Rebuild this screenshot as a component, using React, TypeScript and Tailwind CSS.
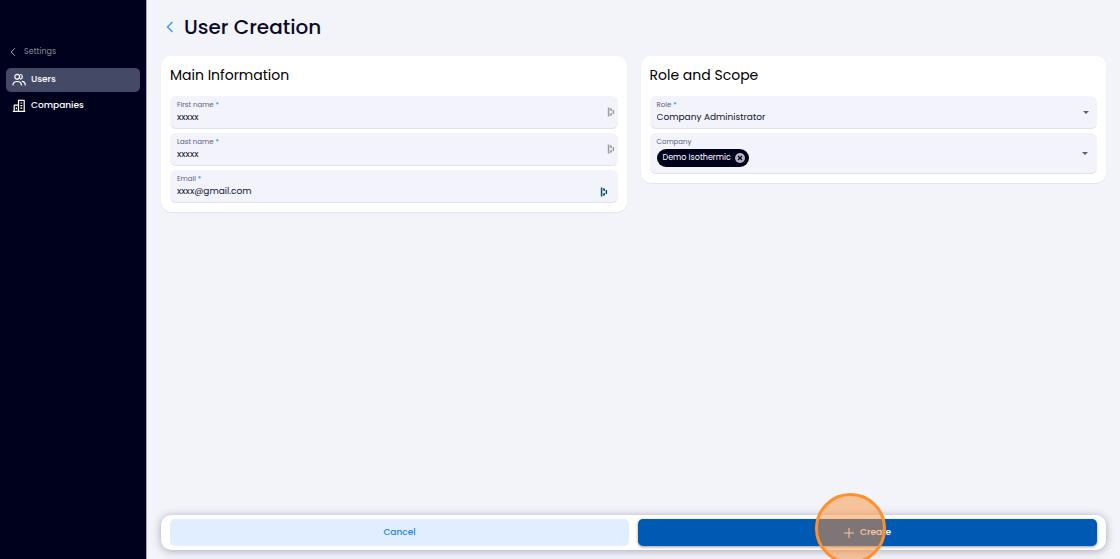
import { useState } from "react";
import type { ReactNode } from "react";

function ChevronLeft({ className }: { className: string }) {
  return (
    <svg viewBox="0 0 8 12" fill="none" stroke="currentColor" className={className} aria-hidden="true">
      <path d="M6.5 1 1.5 6l5 5" strokeWidth="1.3" />
    </svg>
  );
}

function UsersIcon() {
  return (
    <svg viewBox="0 0 14 14" fill="none" stroke="currentColor" strokeWidth="1.2" strokeLinecap="round" className="size-3.5 shrink-0" aria-hidden="true">
      <circle cx="5.2" cy="3.8" r="2.4" />
      <path d="M8.6 1.5a2.4 2.4 0 0 1 0 4.6" />
      <path d="M1 12c0-2.1 1.7-3.5 4.2-3.5S9.4 9.900 9.400 12" />
      <path d="M10.400 8.300c1.900.4 2.900 1.800 2.900 3.700" />
    </svg>
  );
}

function CompaniesIcon() {
  return (
    <svg viewBox="0 0 14 14" fill="none" stroke="currentColor" strokeWidth="1.2" className="size-3.5 shrink-0" aria-hidden="true">
      <path d="M6.500 12.400V1.400h5.700v11M6.500 6.200H2.200v6.200M.800 12.400h12.400" strokeLinejoin="round" />
      <path d="M4.400 8.500v1.800M8.400 4h1.900M8.400 6.600h1.900M8.400 9.200h1.900" />
    </svg>
  );
}

function ManagerIcon({ className }: { className: string }) {
  return (
    <svg viewBox="0 0 8 10" fill="currentColor" className={`h-2.5 w-2 ${className}`} aria-hidden="true">
      <path d="M.8.6h1.600v8.800H.8zM3.100.9l1.900.9v2.400l-1.900-.9zM3.100 6.700 5 5.800v2.400l-1.900.9zM5.600 3h1.500v4H5.600z" />
    </svg>
  );
}

function CaretDown({ className }: { className: string }) {
  return (
    <svg viewBox="0 0 6 3" fill="currentColor" className={`h-[3px] w-1.5 text-[#59607a] ${className}`} aria-hidden="true">
      <path d="M0 0h6L3 3z" />
    </svg>
  );
}

const fieldBox =
  "relative rounded-md border-b border-[#dfe1ee] bg-[#f2f3fb] px-[7px]";
const labelText = "block pt-1 text-[7px] leading-[10px] text-[#59607f]";

function Required() {
  return <span className="text-[#1486ec]"> *</span>;
}

type TextFieldProps = {
  id: string;
  label: string;
  type?: string;
  value: string;
  icon: ReactNode;
};

function TextField({ id, label, type = "text", value, icon }: TextFieldProps) {
  const [text, setText] = useState(value);
  return (
    <div className={`${fieldBox} h-[33px]`}>
      <label htmlFor={id} className={labelText}>
        {label}
        <Required />
      </label>
      <input
        id={id}
        type={type}
        value={text}
        onChange={(e) => setText(e.target.value)}
        className="block h-[14px] w-full bg-transparent text-[9px] leading-[14px] text-[#111432] outline-none"
      />
      {icon}
    </div>
  );
}

function Card({ title, children }: { title: string; children: ReactNode }) {
  return (
    <section className="min-w-0 flex-1 rounded-[10px] bg-white p-[9px] shadow-[0_1px_1px_rgba(40,45,90,0.08)]">
      <h2 className="mb-[11px] text-[14px] leading-5 text-black">{title}</h2>
      <div className="flex flex-col gap-1">{children}</div>
    </section>
  );
}

function Sidebar() {
  return (
    <aside className="w-[147px] shrink-0 border-r border-[#a5a7b3] bg-[#00021d] px-1.5 pt-11 text-white">
      <a href="#settings" className="flex h-4 items-center gap-2 px-1 text-[8px] text-[#858896]">
        <ChevronLeft className="h-2.5 w-1.5 text-[#b2b4be]" />
        <span>Settings</span>
      </a>
      <nav className="mt-2 flex flex-col gap-[2px] text-[9px] font-medium">
        <a href="#users" className="flex h-6 items-center gap-[5px] rounded-[5px] bg-[#444a66] px-1.5">
          <UsersIcon />
          Users
        </a>
        <a href="#companies" className="flex h-6 items-center gap-[5px] rounded-[5px] px-1.5">
          <CompaniesIcon />
          Companies
        </a>
      </nav>
    </aside>
  );
}

export default function App() {
  const [companies, setCompanies] = useState(["Demo Isothermic"]);

  return (
    <div className="flex min-h-screen bg-[#f3f4fa] font-['Poppins','Inter',sans-serif]">
      <Sidebar />
      <main className="flex min-w-0 flex-1 flex-col overflow-hidden px-[14px] pb-[9px]">
        <header className="flex h-14 items-center gap-2.5 pb-[2px] pl-[5px]">
          <a href="#back" aria-label="Back" className="text-[#3298ef]">
            <ChevronLeft className="h-3 w-2" />
          </a>
          <h1 className="text-[20px] leading-7 font-medium text-[#090b28]">User Creation</h1>
        </header>

        <div className="flex items-start gap-[14px]">
          <Card title="Main Information">
            <TextField
              id="first-name"
              label="First name"
              value="xxxxx"
              icon={<ManagerIcon className="absolute top-[11px] right-[3px] text-[#9c9ca2]" />}
            />
            <TextField
              id="last-name"
              label="Last name"
              value="xxxxx"
              icon={<ManagerIcon className="absolute top-[11px] right-[3px] text-[#9c9ca2]" />}
            />
            <TextField
              id="email"
              label="Email"
              type="email"
              value="xxxx@gmail.com"
              icon={<ManagerIcon className="absolute right-2.5 bottom-[5px] text-[#0e5869]" />}
            />
          </Card>

          <Card title="Role and Scope">
            <div className={`${fieldBox} h-[33px]`}>
              <label htmlFor="role" className={labelText}>
                Role
                <Required />
              </label>
              <select
                id="role"
                className="block h-[14px] w-full appearance-none bg-transparent text-[9px] leading-[14px] text-[#111432] outline-none"
              >
                <option>Company Administrator</option>
              </select>
              <CaretDown className="pointer-events-none absolute top-[15px] right-2" />
            </div>
            <div className={`${fieldBox} h-[41px]`}>
              <span className={labelText}>Company</span>
              <div className="flex gap-1 pt-[2px]">
                {companies.map((name) => (
                  <span
                    key={name}
                    className="flex h-[18px] items-center gap-1 rounded-full bg-[#00021d] pr-1 pl-1.5 text-[8px] text-white"
                  >
                    {name}
                    <button
                      type="button"
                      aria-label={`Remove ${name}`}
                      onClick={() => setCompanies(companies.filter((c) => c !== name))}
                    >
                      <svg viewBox="0 0 10 10" className="size-2.5" aria-hidden="true">
                        <circle cx="5" cy="5" r="5" fill="#b3b4bd" />
                        <path d="m3 3 4 4M7 3 3 7" stroke="#00021d" strokeWidth="1.3" />
                      </svg>
                    </button>
                  </span>
                ))}
              </div>
              <button type="button" aria-label="Open company list" className="absolute top-[19px] right-[9px]">
                <CaretDown className="block" />
              </button>
            </div>
          </Card>
        </div>

        <footer className="mt-auto flex gap-[9px] rounded-[10px] bg-white px-[9px] py-1 text-[9px] font-medium shadow-[0_1px_8px_rgba(20,20,60,0.35)]">
          <button type="button" className="h-[27px] flex-1 rounded-[5px] bg-[#e0eeff] text-[#1c87e5]">
            Cancel
          </button>
          <div className="relative flex flex-1">
            <button
              type="button"
              className="flex h-[27px] flex-1 items-center justify-center gap-1.5 rounded-[5px] bg-[#0059b3] text-white shadow-[0_1px_3px_rgba(0,0,0,0.4)]"
            >
              <svg viewBox="0 0 10 10" stroke="currentColor" className="size-2.5" aria-hidden="true">
                <path d="M5 0v10M0 5h10" strokeWidth="1" />
              </svg>
              Create
            </button>
            <span className="pointer-events-none absolute top-[-26px] left-1/2 size-[71px] -ml-[53px] rounded-full border-[3px] border-[#ff902c] bg-[#fb923c]/50" />
          </div>
        </footer>
      </main>
    </div>
  );
}
